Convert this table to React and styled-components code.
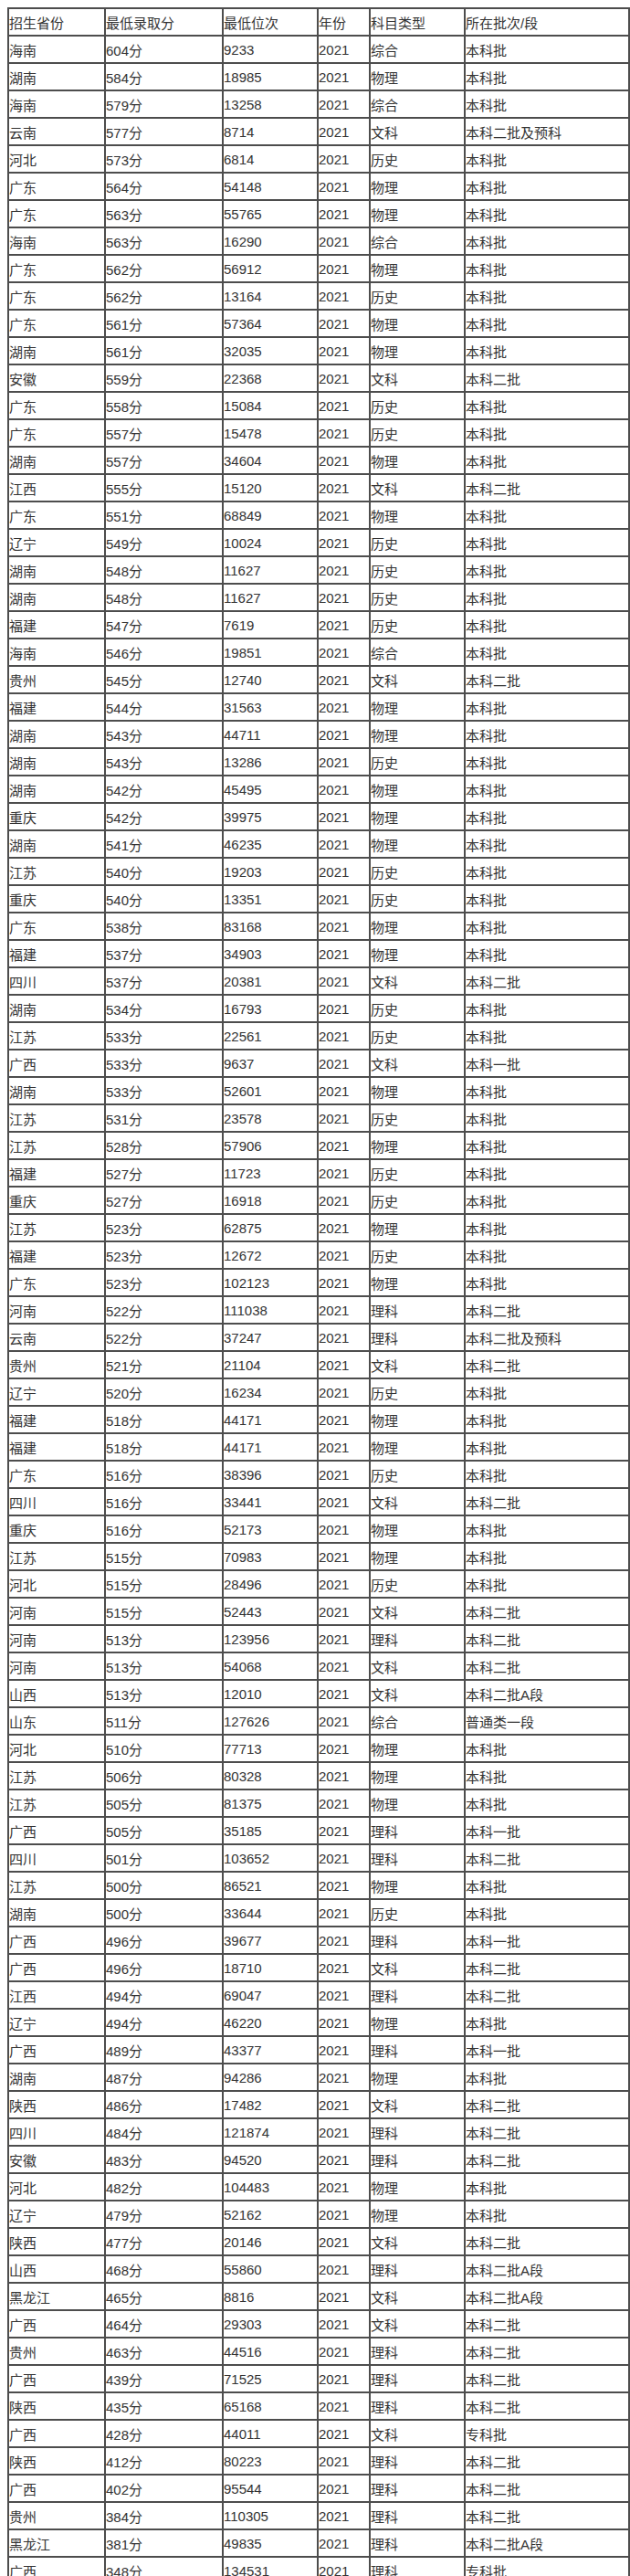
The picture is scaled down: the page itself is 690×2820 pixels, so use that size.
import React from "react";
import styled, { createGlobalStyle } from "styled-components";

const columns = ["招生省份", "最低录取分", "最低位次", "年份", "科目类型", "所在批次/段"];

// 省份 分数 位次 科目 批次 (年份都是2021)
const raw = `
海南 604 9233 综合 本科批
湖南 584 18985 物理 本科批
海南 579 13258 综合 本科批
云南 577 8714 文科 本科二批及预科
河北 573 6814 历史 本科批
广东 564 54148 物理 本科批
广东 563 55765 物理 本科批
海南 563 16290 综合 本科批
广东 562 56912 物理 本科批
广东 562 13164 历史 本科批
广东 561 57364 物理 本科批
湖南 561 32035 物理 本科批
安徽 559 22368 文科 本科二批
广东 558 15084 历史 本科批
广东 557 15478 历史 本科批
湖南 557 34604 物理 本科批
江西 555 15120 文科 本科二批
广东 551 68849 物理 本科批
辽宁 549 10024 历史 本科批
湖南 548 11627 历史 本科批
湖南 548 11627 历史 本科批
福建 547 7619 历史 本科批
海南 546 19851 综合 本科批
贵州 545 12740 文科 本科二批
福建 544 31563 物理 本科批
湖南 543 44711 物理 本科批
湖南 543 13286 历史 本科批
湖南 542 45495 物理 本科批
重庆 542 39975 物理 本科批
湖南 541 46235 物理 本科批
江苏 540 19203 历史 本科批
重庆 540 13351 历史 本科批
广东 538 83168 物理 本科批
福建 537 34903 物理 本科批
四川 537 20381 文科 本科二批
湖南 534 16793 历史 本科批
江苏 533 22561 历史 本科批
广西 533 9637 文科 本科一批
湖南 533 52601 物理 本科批
江苏 531 23578 历史 本科批
江苏 528 57906 物理 本科批
福建 527 11723 历史 本科批
重庆 527 16918 历史 本科批
江苏 523 62875 物理 本科批
福建 523 12672 历史 本科批
广东 523 102123 物理 本科批
河南 522 111038 理科 本科二批
云南 522 37247 理科 本科二批及预科
贵州 521 21104 文科 本科二批
辽宁 520 16234 历史 本科批
福建 518 44171 物理 本科批
福建 518 44171 物理 本科批
广东 516 38396 历史 本科批
四川 516 33441 文科 本科二批
重庆 516 52173 物理 本科批
江苏 515 70983 物理 本科批
河北 515 28496 历史 本科批
河南 515 52443 文科 本科二批
河南 513 123956 理科 本科二批
河南 513 54068 文科 本科二批
山西 513 12010 文科 本科二批A段
山东 511 127626 综合 普通类一段
河北 510 77713 物理 本科批
江苏 506 80328 物理 本科批
江苏 505 81375 物理 本科批
广西 505 35185 理科 本科一批
四川 501 103652 理科 本科二批
江苏 500 86521 物理 本科批
湖南 500 33644 历史 本科批
广西 496 39677 理科 本科一批
广西 496 18710 文科 本科二批
江西 494 69047 理科 本科二批
辽宁 494 46220 物理 本科批
广西 489 43377 理科 本科一批
湖南 487 94286 物理 本科批
陕西 486 17482 文科 本科二批
四川 484 121874 理科 本科二批
安徽 483 94520 理科 本科二批
河北 482 104483 物理 本科批
辽宁 479 52162 物理 本科批
陕西 477 20146 文科 本科二批
山西 468 55860 理科 本科二批A段
黑龙江 465 8816 文科 本科二批A段
广西 464 29303 文科 本科二批
贵州 463 44516 理科 本科二批
广西 439 71525 理科 本科二批
陕西 435 65168 理科 本科二批
广西 428 44011 文科 专科批
陕西 412 80223 理科 本科二批
广西 402 95544 理科 本科二批
贵州 384 110305 理科 本科二批
黑龙江 381 49835 理科 本科二批A段
广西 348 134531 理科 专科批
`;

const rows = raw
  .trim()
  .split("\n")
  .map((line) => {
    const [province, score, rank, subject, batch] = line.split(" ");
    return [province, `${score}分`, rank, "2021", subject, batch];
  });

const widths = [106, 129, 104, 57, 104, 180];

const GlobalStyle = createGlobalStyle`
  body {
    margin: 0;
    background: #fff;
  }
`;

const Page = styled.div`
  padding: 8px 0 0 8px;
`;

const Table = styled.table`
  border-collapse: collapse;
  table-layout: fixed;
  width: 680px;
  font-family: "Liberation Sans", Arial, "Noto Sans CJK SC", sans-serif;
  font-size: 15px;
  color: #333;
`;

const Cell = styled.td`
  border: 2px solid #4d4d4d;
  height: 28px;
  padding: 0;
  text-align: left;
  vertical-align: middle;
  white-space: nowrap;
  overflow: hidden;
  font-weight: normal;
`;

const HeadCell = styled(Cell).attrs({ as: "th" })``;

const App = () => {
  return (
    <Page>
      <GlobalStyle />
      <Table>
        <colgroup>
          {widths.map((w, i) => (
            <col key={i} style={{ width: w }} />
          ))}
        </colgroup>
        <thead>
          <tr>
            {columns.map((c) => (
              <HeadCell key={c}>{c}</HeadCell>
            ))}
          </tr>
        </thead>
        <tbody>
          {rows.map((r, i) => (
            <tr key={i}>
              {r.map((v, j) => (
                <Cell key={j}>{v}</Cell>
              ))}
            </tr>
          ))}
        </tbody>
      </Table>
    </Page>
  );
};

export default App;
